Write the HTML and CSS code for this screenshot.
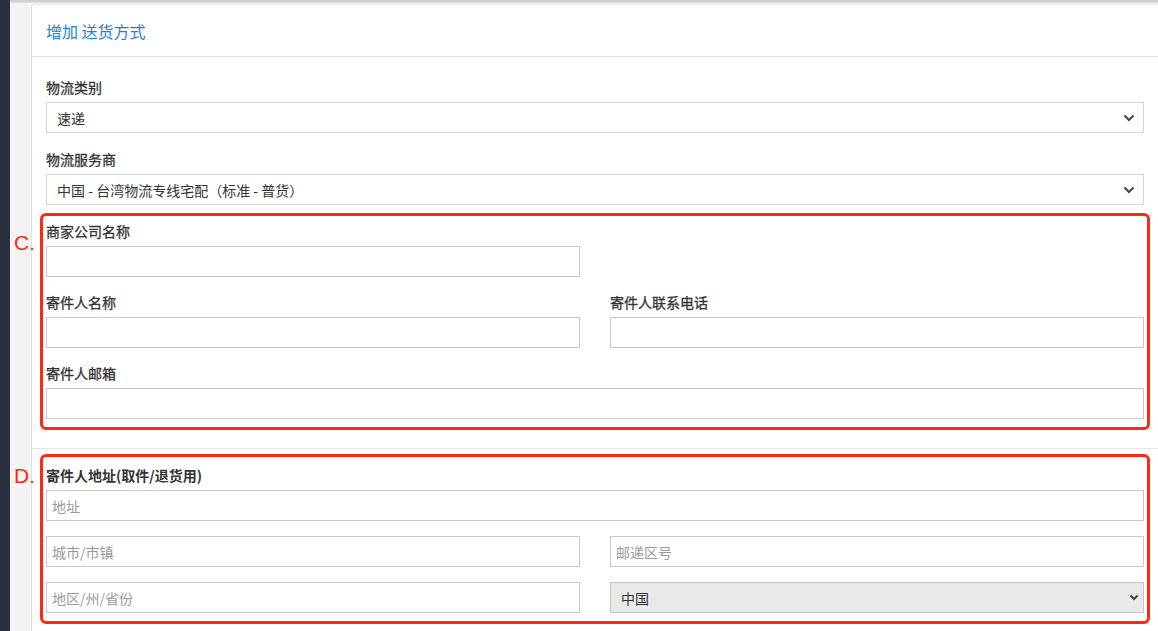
FILE: index.html
```html
<!DOCTYPE html>
<html lang="zh-CN">
<head>
<meta charset="utf-8">
<title>增加 送货方式</title>
<link rel="stylesheet" href="styles.css">
</head>
<body>
<div class="app">
  <aside class="sidebar"></aside>
  <main class="main">
    <div class="topbar-shadow"></div>
    <div class="card">
      <div class="card-header">增加 送货方式</div>
      <div class="card-body">
        <div class="group">
          <label class="label">物流类别</label>
          <div class="select-wrap">
            <select class="control select"><option>速递</option></select>
            <svg class="chevron" width="12" height="8" viewBox="0 0 12 8"><path d="M1.5 1.5 L6 6 L10.5 1.5" fill="none" stroke="#444" stroke-width="2"/></svg>
          </div>
        </div>
        <div class="group group-tight">
          <label class="label">物流服务商</label>
          <div class="select-wrap">
            <select class="control select"><option>中国 - 台湾物流专线宅配（标准 - 普货）</option></select>
            <svg class="chevron" width="12" height="8" viewBox="0 0 12 8"><path d="M1.5 1.5 L6 6 L10.5 1.5" fill="none" stroke="#444" stroke-width="2"/></svg>
          </div>
        </div>
        <div class="annot annot-c">
          <span class="annot-tag tag-c">C.</span>
          <div class="row">
            <div class="group">
              <label class="label">商家公司名称</label>
              <input class="control input" type="text">
            </div>
          </div>
          <div class="row">
            <div class="group">
              <label class="label">寄件人名称</label>
              <input class="control input" type="text">
            </div>
            <div class="group">
              <label class="label">寄件人联系电话</label>
              <input class="control input" type="text">
            </div>
          </div>
          <div class="group group-last">
            <label class="label">寄件人邮箱</label>
            <input class="control input" type="text">
          </div>
        </div>
      </div>
      <div class="card-body card-body-second">
        <div class="annot annot-d">
          <span class="annot-tag tag-d">D.</span>
          <label class="label label-strong">寄件人地址(取件/退货用)</label>
          <input class="control input addr" type="text" placeholder="地址">
          <div class="row">
            <input class="control input addr" type="text" placeholder="城市/市镇">
            <input class="control input addr" type="text" placeholder="邮递区号">
          </div>
          <div class="row row-last">
            <input class="control input" type="text" placeholder="地区/州/省份">
            <div class="select-wrap">
              <select class="control select select-gray"><option>中国</option></select>
              <svg class="chevron chevron-small" width="10" height="7" viewBox="0 0 10 7"><path d="M1.5 1.5 L5 5 L8.5 1.5" fill="none" stroke="#444" stroke-width="2"/></svg>
            </div>
          </div>
        </div>
      </div>
    </div>
  </main>
</div>
</body>
</html>
```
FILE: styles.css
```css
* { box-sizing: border-box; }
html, body {
  margin: 0;
  padding: 0;
  height: 100%;
  overflow: hidden;
}
body {
  font-family: "Noto Sans CJK SC", "Liberation Sans", sans-serif;
  color: #333;
  background: #f4f4f5;
}
.app {
  display: flex;
  min-height: 100vh;
}
.sidebar {
  width: 10px;
  flex: 0 0 10px;
  background: #2a2f3e;
}
.main {
  flex: 1;
  background: #f3f3f4;
  padding-left: 21px;
  position: relative;
}
.topbar-shadow {
  height: 3px;
  margin-left: -21px;
  background: linear-gradient(#c9c9c9, #e2e2e2);
}
.card {
  margin-top: 1px;
  background: #fff;
  border-left: 1px solid #e1e1e1;
  border-top: 1px solid #ececec;
  border-top-left-radius: 4px;
  min-height: 640px;
}
.card-header {
  padding: 16px 14px 15px;
  font-size: 16px;
  line-height: 20px;
  color: #1f7fd6;
  border-bottom: 1px solid #e3e3e3;
}
.card-body {
  padding: 21px 14px 18px;
}
.card-body-second {
  border-top: 1px solid #e6e6e6;
  padding-top: 5px;
}
.group {
  display: flex;
  flex-direction: column;
  margin-bottom: 17px;
}
.group-tight { margin-bottom: 8px; }
.group-last { margin-bottom: 0; }
.label {
  display: block;
  font-size: 14px;
  line-height: 18px;
  font-weight: 400;
  -webkit-text-stroke: 0.3px #333;
  color: #333;
  margin-bottom: 6px;
}
.label-strong { font-weight: 700; -webkit-text-stroke: 0; }
.control {
  display: block;
  width: 100%;
  height: 31px;
  margin: 0;
  border: 1px solid #c8c8c8;
  border-radius: 0;
  background: #fff;
  font-family: "Noto Sans CJK SC", "Liberation Sans", sans-serif;
  font-size: 14px;
  color: #333;
  outline: none;
}
.input { padding: 0 5px; }
.input::placeholder { color: #9a9a9a; }
.select {
  -webkit-appearance: none;
  appearance: none;
  padding: 0 30px 0 10px;
  border-color: #d4d4d4;
}
.select-gray {
  background: #e9e9e9;
  border-color: #c4c4c4;
}
.select-wrap { position: relative; }
.chevron {
  position: absolute;
  right: 9px;
  top: 12px;
  pointer-events: none;
}
.chevron-small {
  right: 5px;
  top: 12px;
}
.annot {
  position: relative;
  margin: 0 -6px;
  padding: 6px 3px 8px;
  border: 3px solid #ff2810;
  border-radius: 6px;
}
.annot-d { padding-top: 9px; }
.annot-tag {
  position: absolute;
  right: calc(100% + 8px);
  font-family: "Liberation Sans", sans-serif;
  font-size: 21px;
  line-height: 21px;
  color: #ff2810;
}
.tag-c { top: 16px; }
.tag-d { top: 8px; }
.row {
  display: grid;
  grid-template-columns: 1fr 1fr;
  column-gap: 30px;
}
.annot-c .row .group { margin-bottom: 16px; }
.annot-d .addr { margin-bottom: 15px; }
.row-last .input { margin-bottom: 0; }
```
